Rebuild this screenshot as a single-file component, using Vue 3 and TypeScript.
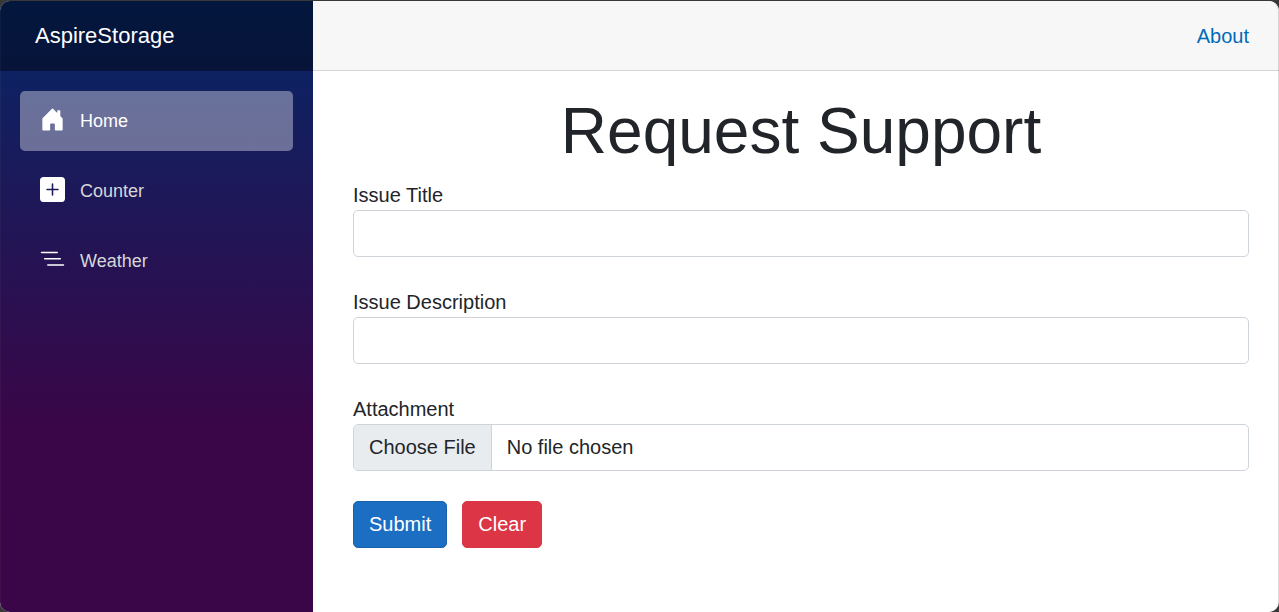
<script setup lang="ts">
import { ref } from 'vue'

interface NavItem {
  label: string
  icon: string
  active: boolean
}

const navItems: NavItem[] = [
  {
    label: 'Home',
    active: true,
    icon: 'M6.5 14.5v-3.505c0-.245.25-.495.5-.495h2c.25 0 .5.25.5.5v3.5a.5.5 0 0 0 .5.5h4a.5.5 0 0 0 .5-.5v-7a.5.5 0 0 0-.146-.354L13 5.793V2.5a.5.5 0 0 0-.5-.5h-1a.5.5 0 0 0-.5.5v1.293L8.354 1.146a.5.5 0 0 0-.708 0l-6 6A.5.5 0 0 0 1.5 7.5v7a.5.5 0 0 0 .5.5h4a.5.5 0 0 0 .5-.5Z',
  },
  {
    label: 'Counter',
    active: false,
    icon: 'M2 0a2 2 0 0 0-2 2v12a2 2 0 0 0 2 2h12a2 2 0 0 0 2-2V2a2 2 0 0 0-2-2H2zm6.5 4.5v3h3a.5.5 0 0 1 0 1h-3v3a.5.5 0 0 1-1 0v-3h-3a.5.5 0 0 1 0-1h3v-3a.5.5 0 0 1 1 0z',
  },
  {
    label: 'Weather',
    active: false,
    icon: 'M4.5 11.5A.5.5 0 0 1 5 11h10a.5.5 0 0 1 0 1H5a.5.5 0 0 1-.5-.5zm-2-4A.5.5 0 0 1 3 7h10a.5.5 0 0 1 0 1H3a.5.5 0 0 1-.5-.5zm-2-4A.5.5 0 0 1 1 3h10a.5.5 0 0 1 0 1H1a.5.5 0 0 1-.5-.5z',
  },
]

const title = ref('')
const description = ref('')
const fileInput = ref<HTMLInputElement | null>(null)

function clearForm(): void {
  title.value = ''
  description.value = ''
  if (fileInput.value) fileInput.value.value = ''
}
</script>

<template>
  <div class="page">
    <aside class="sidebar">
      <div class="brand-row">
        <a class="brand" href="#">AspireStorage</a>
      </div>
      <nav class="nav">
        <a
          v-for="item in navItems"
          :key="item.label"
          href="#"
          class="nav-link"
          :class="{ active: item.active }"
        >
          <svg class="nav-icon" viewBox="0 0 16 16" aria-hidden="true">
            <path :d="item.icon" fill="currentColor" />
          </svg>
          <span>{{ item.label }}</span>
        </a>
      </nav>
    </aside>

    <main class="main">
      <header class="top-row">
        <a class="about" href="#">About</a>
      </header>
      <article class="content">
        <h1 class="heading">Request Support</h1>
        <form class="form" @submit.prevent>
          <div class="field">
            <label for="issue-title">Issue Title</label>
            <input id="issue-title" v-model="title" class="control" type="text" />
          </div>
          <div class="field">
            <label for="issue-description">Issue Description</label>
            <input id="issue-description" v-model="description" class="control" type="text" />
          </div>
          <div class="field">
            <label for="attachment">Attachment</label>
            <input id="attachment" ref="fileInput" class="control" type="file" />
          </div>
          <div class="actions">
            <button class="btn primary" type="submit">Submit</button>
            <button class="btn danger" type="button" @click="clearForm">Clear</button>
          </div>
        </form>
      </article>
    </main>
  </div>
</template>

<style>
html {
  background: #383838;
}
body {
  margin: 0;
}
</style>

<style scoped>
*,
*::before,
*::after {
  box-sizing: border-box;
}

.page {
  position: relative;
  display: flex;
  min-height: calc(100vh - 1px);
  margin-top: 1px;
  overflow: hidden;
  border-radius: 10px;
  background: #fff;
  color: #212529;
  font-family: "Liberation Sans", Arial, sans-serif;
  font-size: 20px;
  line-height: 30px;
}

/* Hairline window edge drawn over both panes */
.page::after {
  content: "";
  position: absolute;
  inset: 0;
  border: 1px solid rgba(110, 110, 110, 0.25);
  border-left-color: rgba(110, 110, 110, 0.1);
  border-top: 0;
  border-bottom: 0;
  border-radius: inherit;
  pointer-events: none;
}

.sidebar {
  flex: 0 0 313px;
  background: linear-gradient(180deg, rgb(5, 39, 103) 0%, #3a0647 70%);
}

.brand-row {
  display: flex;
  align-items: center;
  height: 70px;
  padding-left: 35px;
  background: rgba(0, 0, 0, 0.4);
}

.brand {
  color: #fff;
  font-size: 22px;
  text-decoration: none;
}

.nav {
  display: flex;
  flex-direction: column;
  gap: 10px;
  padding: 20px;
}

.nav-link {
  display: flex;
  align-items: center;
  gap: 15px;
  height: 60px;
  padding: 0 20px;
  border-radius: 5px;
  color: #d7d7d7;
  font-size: 18px;
  text-decoration: none;
}

.nav-link.active {
  background: rgba(255, 255, 255, 0.37);
  color: #fff;
}

.nav-icon {
  flex: none;
  width: 25px;
  height: 25px;
  margin-bottom: 3px;
  border-radius: 3px;
  color: #fff;
}

.main {
  flex: 1;
  min-width: 0;
}

.top-row {
  display: flex;
  align-items: center;
  justify-content: flex-end;
  height: 70px;
  padding-right: 30px;
  border-bottom: 1px solid #d6d5d5;
  background: #f7f7f7;
}

.about {
  color: #006bb7;
  text-decoration: none;
}

.content {
  padding: 22px 30px 30px 40px;
}

.heading {
  margin: 0 0 10px;
  font-size: 64px;
  font-weight: 400;
  line-height: 77px;
  text-align: center;
}

.form {
  display: flex;
  flex-direction: column;
  gap: 30px;
}

.field {
  display: flex;
  flex-direction: column;
}

.control {
  width: 100%;
  height: 47px;
  padding: 7px 15px;
  border: 1px solid #ced4da;
  border-radius: 5px;
  background: #fff;
  color: #212529;
  font: inherit;
  overflow: hidden;
}

.control[type="file"] {
  padding: 0;
}

.control::file-selector-button {
  height: 45px;
  margin: 0 15px 0 0;
  padding: 0 15px 2px;
  border: 0 solid #ced4da;
  border-right-width: 1px;
  border-radius: 0;
  background: #e9ecef;
  color: #212529;
  font: inherit;
}

.actions {
  display: flex;
  gap: 15px;
}

.btn {
  height: 47px;
  padding: 0 15px 2px;
  border: 1px solid;
  border-radius: 5px;
  color: #fff;
  font: inherit;
  cursor: pointer;
}

.primary {
  border-color: #1861ac;
  background: #1b6ec2;
}

.danger {
  border-color: #dc3545;
  background: #dc3545;
}
</style>
